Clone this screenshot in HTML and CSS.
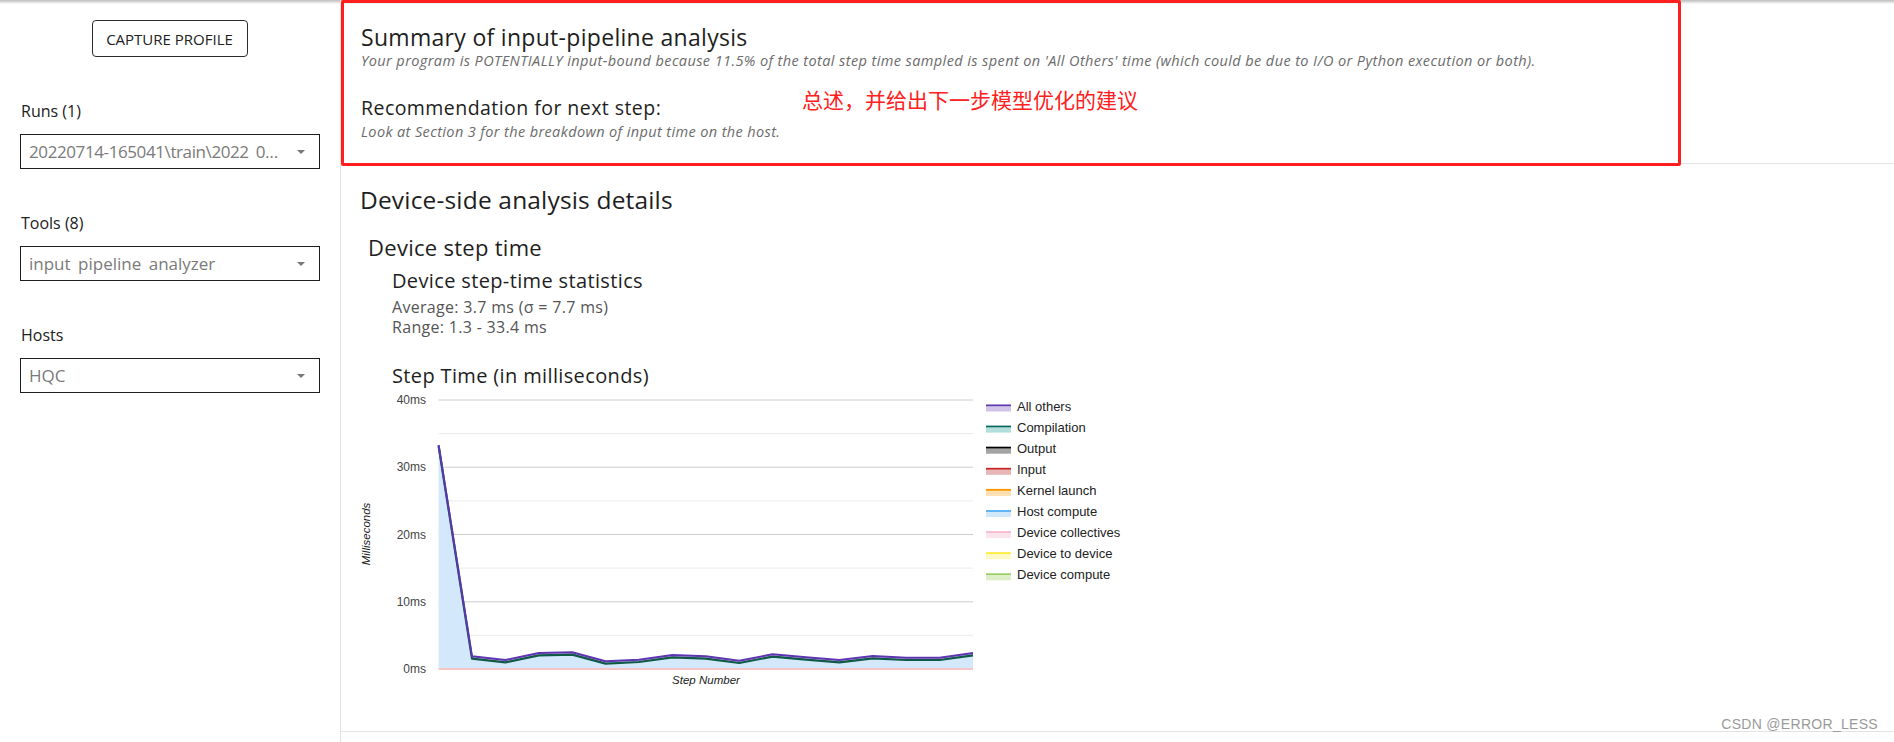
FILE: index.html
```html
<!DOCTYPE html>
<html lang="en">
<head>
<meta charset="utf-8">
<title>Input pipeline analyzer</title>
<link rel="stylesheet" href="styles.css">
</head>
<body>
<div class="app">
  <aside class="sidebar">
    <div class="capture-wrap"><button class="capture">CAPTURE PROFILE</button></div>
    <div class="field">
      <div class="field-label">Runs (1)</div>
      <div class="select"><span class="select-value tight">20220714-165041\train\2022<span class="us">_</span>07<span class="us">_</span>14<span class="us">_</span>08<span class="us">_</span>50<span class="us">_</span>41</span><span class="arrow"></span></div>
    </div>
    <div class="field">
      <div class="field-label">Tools (8)</div>
      <div class="select"><span class="select-value">input<span class="us">_</span>pipeline<span class="us">_</span>analyzer</span><span class="arrow"></span></div>
    </div>
    <div class="field">
      <div class="field-label">Hosts</div>
      <div class="select"><span class="select-value">HQC</span><span class="arrow"></span></div>
    </div>
  </aside>
  <main class="main">
    <section class="summary">
      <h2 class="summary-title">Summary of input-pipeline analysis</h2>
      <p class="summary-text">Your program is POTENTIALLY input-bound because 11.5% of the total step time sampled is spent on 'All Others' time (which could be due to I/O or Python execution or both).</p>
      <h3 class="rec-title">Recommendation for next step:</h3>
      <p class="summary-text rec-text">Look at Section 3 for the breakdown of input time on the host.</p>
      <div class="annot-box"></div>
      <div class="annot-text">总述，并给出下一步模型优化的建议</div>
    </section>
    <section class="details">
      <h2 class="details-title">Device-side analysis details</h2>
      <div class="step-time">
        <h3 class="step-title">Device step time</h3>
        <div class="step-body">
          <h4 class="stats-title">Device step-time statistics</h4>
          <div class="stat">Average: 3.7 ms (σ = 7.7 ms)</div>
          <div class="stat">Range: 1.3 - 33.4 ms</div>
          <h4 class="chart-title">Step Time (in milliseconds)</h4>
          <svg class="chart" width="760" height="310" viewBox="0 0 760 310">
            <g class="grid">
              <line x1="46.6" x2="581" y1="11" y2="11" class="major"/>
              <line x1="46.6" x2="581" y1="44.6" y2="44.6" class="minor"/>
              <line x1="46.6" x2="581" y1="78.2" y2="78.2" class="major"/>
              <line x1="46.6" x2="581" y1="111.9" y2="111.9" class="minor"/>
              <line x1="46.6" x2="581" y1="145.5" y2="145.5" class="major"/>
              <line x1="46.6" x2="581" y1="179.1" y2="179.1" class="minor"/>
              <line x1="46.6" x2="581" y1="212.8" y2="212.8" class="major"/>
              <line x1="46.6" x2="581" y1="246.4" y2="246.4" class="minor"/>
            </g>
            <g class="ylabels">
              <text x="34" y="15">40ms</text>
              <text x="34" y="82">30ms</text>
              <text x="34" y="149.5">20ms</text>
              <text x="34" y="217">10ms</text>
              <text x="34" y="284">0ms</text>
            </g>
            <text class="axis-title" transform="translate(-22 145) rotate(-90)" text-anchor="middle">Milliseconds</text>
            <text class="axis-title" x="314" y="295" text-anchor="middle">Step Number</text>
            <polygon class="area-host" points="46.6,280 46.6,57 80,269.6 113.4,273.3 146.8,266.3 180.2,265.6 213.6,274.6 247,273 280.4,268.3 313.8,269.6 347.2,274 380.6,267.6 414,270.6 447.4,273.3 480.8,269.3 514.2,271 547.6,271 581,266.3 581,280"/>
            <polygon class="area-others" points="46.6,56 80,267.3 113.4,271 146.8,264 180.2,263.3 213.6,272.3 247,270.7 280.4,266 313.8,267.3 347.2,271.7 380.6,265.3 414,268.3 447.4,271 480.8,267 514.2,268.7 547.6,268.7 581,264 581,266.3 547.6,271 514.2,271 480.8,269.3 447.4,273.3 414,270.6 380.6,267.6 347.2,274 313.8,269.6 280.4,268.3 247,273 213.6,274.6 180.2,265.6 146.8,266.3 113.4,273.3 80,269.6 46.6,57"/>
            <line class="zero-line" x1="46.6" x2="581" y1="280" y2="280"/>
            <polyline class="line-comp" points="46.6,57 80,269.6 113.4,273.3 146.8,266.3 180.2,265.6 213.6,274.6 247,273 280.4,268.3 313.8,269.6 347.2,274 380.6,267.6 414,270.6 447.4,273.3 480.8,269.3 514.2,271 547.6,271 581,266.3"/>
            <polyline class="line-others" points="46.6,56 80,267.3 113.4,271 146.8,264 180.2,263.3 213.6,272.3 247,270.7 280.4,266 313.8,267.3 347.2,271.7 380.6,265.3 414,268.3 447.4,271 480.8,267 514.2,268.7 547.6,268.7 581,264"/>
            <g class="legend">
              <rect x="594" y="15.5" width="25" height="2" fill="#5e35b1"/><rect x="594" y="17.5" width="25" height="5" fill="#d1c4e9"/>
              <text x="625" y="21.5">All others</text>
              <rect x="594" y="36.6" width="25" height="2" fill="#00695c"/><rect x="594" y="38.6" width="25" height="5" fill="#b2dfdb"/>
              <text x="625" y="42.6">Compilation</text>
              <rect x="594" y="57.7" width="25" height="2" fill="#000000"/><rect x="594" y="59.7" width="25" height="5" fill="#a3a3a3"/>
              <text x="625" y="63.7">Output</text>
              <rect x="594" y="78.8" width="25" height="2" fill="#c62828"/><rect x="594" y="80.8" width="25" height="5" fill="#e8b6b6"/>
              <text x="625" y="84.8">Input</text>
              <rect x="594" y="99.9" width="25" height="2" fill="#ff9800"/><rect x="594" y="101.9" width="25" height="5" fill="#ffe0b2"/>
              <text x="625" y="105.9">Kernel launch</text>
              <rect x="594" y="121" width="25" height="2" fill="#64b5f6"/><rect x="594" y="123" width="25" height="5" fill="#d2e7fa"/>
              <text x="625" y="127">Host compute</text>
              <rect x="594" y="142.1" width="25" height="2" fill="#f8bbd0"/><rect x="594" y="144.1" width="25" height="5" fill="#fce4ec"/>
              <text x="625" y="148.1">Device collectives</text>
              <rect x="594" y="163.2" width="25" height="2" fill="#ffeb3b"/><rect x="594" y="165.2" width="25" height="5" fill="#fff9c4"/>
              <text x="625" y="169.2">Device to device</text>
              <rect x="594" y="184.3" width="25" height="2" fill="#9ccc65"/><rect x="594" y="186.3" width="25" height="5" fill="#dcedc8"/>
              <text x="625" y="190.3">Device compute</text>
            </g>
          </svg>
        </div>
      </div>
    </section>
  </main>
  <div class="watermark">CSDN @ERROR_LESS</div>
</div>
</body>
</html>
```

FILE: styles.css
```css
* { box-sizing: border-box; }
html, body { margin: 0; padding: 0; }
body {
  width: 1894px;
  height: 742px;
  overflow: hidden;
  font-family: "Open Sans", "Noto Sans", sans-serif;
  color: #212121;
  background: #fff linear-gradient(#bdbdbd 0, #dcdcdc 2px, #fff 4px) no-repeat;
}
.app {
  position: relative;
  display: flex;
  height: 742px;
}
.sidebar {
  width: 341px;
  flex: none;
  border-right: 1px solid #e3e3e3;
  padding: 20px 20px 0 20px;
}
.capture-wrap {
  display: flex;
  justify-content: center;
  padding-right: 1px;
}
.capture {
  width: 156px;
  height: 37px;
  border: 1px solid #2b2b2b;
  border-radius: 4px;
  background: #fff;
  font-family: "Open Sans", sans-serif;
  font-size: 15px;
  color: #212121;
  padding: 0;
}
.field { margin-top: 42px; }
.field-label {
  font-size: 16px;
  line-height: 24px;
  height: 24px;
  color: #212121;
  padding-left: 1px;
}
.select {
  margin-top: 11px;
  width: 300px;
  height: 35px;
  border: 1px solid #1e1e1e;
  display: flex;
  align-items: center;
  padding: 0 14px 0 8px;
  gap: 12px;
}
.select-value {
  flex: 1;
  min-width: 0;
  font-size: 17px;
  line-height: 22px;
  color: #7a7a7a;
  white-space: nowrap;
  overflow: hidden;
  text-overflow: ellipsis;
}
.select-value.tight { letter-spacing: -0.4px; }
.us { color: transparent; }
.arrow {
  width: 0;
  height: 0;
  border-left: 4.5px solid transparent;
  border-right: 4.5px solid transparent;
  border-top: 4.5px solid #777;
}
.main {
  flex: 1;
  min-width: 0;
}
.summary {
  position: relative;
  height: 164px;
  border-bottom: 1px solid #e3e3e3;
  padding: 23px 20px 0 20px;
}
.summary-title {
  margin: 0;
  font-size: 23px;
  line-height: 28px;
  font-weight: 400;
  letter-spacing: 0.3px;
  color: #1e1e1e;
}
.summary-text {
  margin: 1px 0 0 0;
  font-size: 14.5px;
  line-height: 18px;
  font-style: italic;
  letter-spacing: 0.4px;
  color: #6b6b6b;
}
.rec-title {
  margin: 26px 0 0 0;
  font-size: 19.5px;
  line-height: 24px;
  font-weight: 400;
  letter-spacing: 0.45px;
  color: #1e1e1e;
}
.rec-text { margin-top: 3px; letter-spacing: 0.38px; }
.annot-box {
  position: absolute;
  left: 0;
  top: 0;
  width: 1340px;
  height: 166px;
  border: 3px solid #ff1d1d;
  border-radius: 2px;
}
.annot-text {
  position: absolute;
  left: 461px;
  top: 88px;
  font-family: "Noto Sans CJK SC", sans-serif;
  font-size: 21px;
  line-height: 22px;
  color: #ff2020;
  white-space: nowrap;
}
.details {
  height: 568px;
  border-bottom: 1px solid #e3e3e3;
  padding: 20px 0 0 19px;
}
.details-title {
  margin: 0;
  font-size: 24.5px;
  line-height: 32px;
  font-weight: 400;
  letter-spacing: 0.17px;
  color: #1e1e1e;
}
.step-time {
  margin-top: 17px;
  padding-left: 8px;
}
.step-title {
  margin: 0;
  font-size: 22px;
  line-height: 28px;
  font-weight: 400;
  letter-spacing: 0.28px;
  color: #1e1e1e;
}
.step-body {
  padding-left: 24px;
}
.stats-title {
  margin: 7.5px 0 0 0;
  font-size: 20px;
  line-height: 24px;
  font-weight: 400;
  letter-spacing: 0.36px;
  color: #1e1e1e;
}
.stat {
  font-size: 16px;
  line-height: 20px;
  letter-spacing: 0.31px;
  color: #555;
}
.stats-title + .stat { margin-top: 4.5px; }
.chart-title {
  margin: 27px 0 0 0;
  font-size: 20px;
  line-height: 24px;
  font-weight: 400;
  letter-spacing: 0.36px;
  color: #1e1e1e;
}
.chart {
  display: block;
  margin-top: 1px;
  overflow: visible;
  font-family: "Liberation Sans", Arial, sans-serif;
}
.grid line { stroke-width: 1; }
.grid .major { stroke: #cccccc; }
.grid .minor { stroke: #ebebeb; }
.ylabels text {
  font-size: 12px;
  fill: #444;
  text-anchor: end;
}
.axis-title {
  font-size: 11.5px;
  font-style: italic;
  fill: #222;
}
.area-host { fill: #d3e8fa; }
.area-others { fill: #d8ccee; }
.zero-line { stroke: #f6c4c4; stroke-width: 2; }
.line-comp { fill: none; stroke: #0f5a47; stroke-width: 2.2; stroke-linejoin: round; }
.line-others { fill: none; stroke: #5e35b1; stroke-width: 2; stroke-linejoin: round; }
.legend text {
  font-size: 13px;
  fill: #222;
}
.watermark {
  position: absolute;
  right: 16px;
  top: 716px;
  font-family: "Liberation Sans", Arial, sans-serif;
  font-size: 14px;
  line-height: 16px;
  color: #9a9a9a;
  letter-spacing: 0.3px;
}
```
